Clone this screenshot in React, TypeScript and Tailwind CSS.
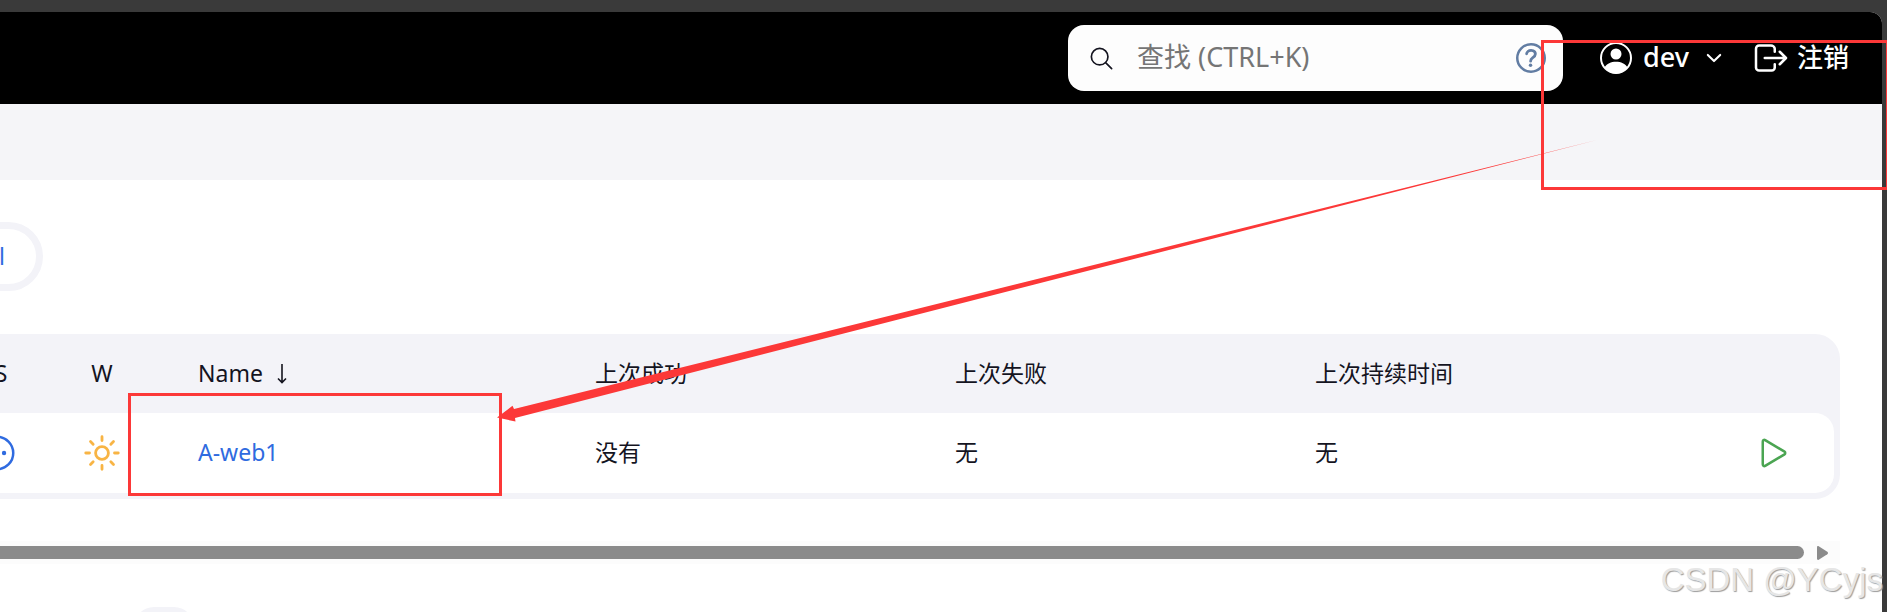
import type { ReactNode } from "react";

const stroke = {
  fill: "none",
  stroke: "currentColor",
  strokeWidth: 32,
  strokeLinecap: "round" as const,
  strokeLinejoin: "round" as const,
};

function Icon({ className, children }: { className: string; children: ReactNode }) {
  return (
    <svg viewBox="0 0 512 512" aria-hidden="true" className={className} {...stroke}>
      {children}
    </svg>
  );
}

function SearchIcon() {
  return (
    <Icon className="size-[27px] shrink-0 text-[#14141f]">
      <path d="M221.09 64a157.09 157.09 0 10157.09 157.09A157.1 157.1 0 00221.09 64z" />
      <path d="M338.29 338.29L448 448" />
    </Icon>
  );
}

function HelpIcon() {
  return (
    <Icon className="size-10">
      <path d="M256 80a176 176 0 10176 176A176 176 0 00256 80z" />
      <path
        strokeWidth={36}
        d="M200 202.29s.84-17.5 19.57-32.57C230.68 160.77 244 158.18 256 158c10.93-.14 20.69 1.67 26.53 4.45 10 4.76 29.47 16.38 29.47 41.09 0 26-17 37.81-36.37 50.8S251 281.43 251 296"
      />
      <circle cx="250" cy="348" r="22" fill="currentColor" stroke="none" />
    </Icon>
  );
}

function UserIcon() {
  return (
    <svg viewBox="0 0 32 32" aria-hidden="true" className="size-8">
      <circle cx="16" cy="16" r="15" fill="none" stroke="currentColor" strokeWidth="2" />
      <circle cx="16" cy="12" r="5.5" fill="currentColor" />
      <path d="M4.500 25.500c2-3.900 6.700-5.800 11.500-5.800s9.500 1.900 11.500 5.800c-2.900 3.900-6.900 5.900-11.500 5.900S7.400 29.400 4.500 25.500z" fill="currentColor" />
    </svg>
  );
}

function ChevronIcon() {
  return (
    <Icon className="size-[22px]">
      <path strokeWidth={48} d="M112 184l144 144 144-144" />
    </Icon>
  );
}

function LogoutIcon() {
  return (
    <Icon className="size-10">
      <path d="M304 336v40a40 40 0 01-40 40H104a40 40 0 01-40-40V136a40 40 0 0140-40h152c22.090 0 48 17.910 48 40v40M368 336l80-80-80-80M176 256h256" />
    </Icon>
  );
}

function StatusIcon() {
  return (
    <Icon className="mx-auto size-10 text-[#2f6be0]">
      <circle cx="256" cy="256" r="208" />
      <g fill="currentColor" stroke="none">
        <circle cx="166" cy="256" r="28" />
        <circle cx="256" cy="256" r="28" />
        <circle cx="346" cy="256" r="28" />
      </g>
    </Icon>
  );
}

function SunIcon() {
  return (
    <Icon className="mx-auto size-10 text-[#f8b444]">
      <path
        strokeWidth={36}
        d="M256 48v48M256 416v48M403.080 108.920l-33.940 33.940M142.860 369.140l-33.940 33.940M464 256h-48M96 256H48M403.080 403.080l-33.940-33.940M142.860 142.860l-33.940-33.940"
      />
      <circle cx="256" cy="256" r="82" strokeWidth={36} />
    </Icon>
  );
}

function PlayIcon() {
  return (
    <Icon className="size-10">
      <path d="M112 111v290c0 17.440 17 28.520 31 20.160l247.900-148.370c12.120-7.250 12.120-26.330 0-33.580L143 90.840c-14-8.360-31 2.720-31 20.160z" />
    </Icon>
  );
}

function Header() {
  return (
    <header className="flex h-[92px] items-center justify-end bg-black pr-[33px] text-[26px] text-white">
      <div className="flex h-[66px] w-[495px] items-center rounded-2xl bg-[#fdfdfd] pr-3 pl-5">
        <SearchIcon />
        <input
          type="search"
          aria-label="查找"
          placeholder="查找 (CTRL+K)"
          className="ml-[22px] min-w-0 flex-1 bg-transparent pb-0.5 text-[27px] text-black outline-none placeholder:text-[#757575]"
        />
        <a href="#help" aria-label="帮助" className="text-[#627da3]">
          <HelpIcon />
        </a>
      </div>
      <a href="#user" className="ml-[37px] flex items-center gap-[11px]">
        <UserIcon />
        <span className="pb-0.5 text-[27px] font-medium">dev</span>
      </a>
      <button type="button" aria-label="用户菜单" className="ml-3.5">
        <ChevronIcon />
      </button>
      <a href="#logout" className="ml-[26px] flex items-center gap-1.5">
        <LogoutIcon />
        <span className="pb-0.5 font-medium">注销</span>
      </a>
    </header>
  );
}

function JobTable() {
  return (
    <div className="rounded-[25px] border-6 border-[#f3f3f8] bg-[#f3f3f8]">
      <table className="w-full table-fixed border-separate border-spacing-0 text-left text-[23px] text-[#14141f]">
        <colgroup>
          <col className="w-[98px]" />
          <col className="w-[104px]" />
          <col className="w-[397px]" />
          <col className="w-[360px]" />
          <col className="w-[360px]" />
          <col />
          <col className="w-[140px]" />
        </colgroup>
        <thead>
          <tr className="h-[73px]">
            <th className="pb-1.5 text-center font-normal">S</th>
            <th className="pb-1.5 text-center font-normal">W</th>
            <th className="px-11 pb-1.5 font-normal">
              <a href="#sort" className="flex items-center gap-3.5">
                Name
                <svg viewBox="0 0 10 20" aria-hidden="true" className="h-5 w-2.5" fill="none" stroke="currentColor" strokeWidth="1.6">
                  <path d="M5 0v18M1 14.500l4 4 4-4" />
                </svg>
              </a>
            </th>
            <th className="px-11 pb-1.5 font-normal">上次成功</th>
            <th className="px-11 pb-1.5 font-normal">上次失败</th>
            <th className="px-11 pb-1.5 font-normal">上次持续时间</th>
            <th aria-label="操作" />
          </tr>
        </thead>
        <tbody>
          <tr className="h-20">
            <td className="rounded-l-[19px] bg-white pr-2">
              <StatusIcon />
            </td>
            <td className="bg-white">
              <SunIcon />
            </td>
            <td className="bg-white px-11 pb-0.5">
              <a href="#A-web1" className="text-[#2f6be0]">
                A-web1
              </a>
            </td>
            <td className="bg-white px-11 pb-0.5">没有</td>
            <td className="bg-white px-11 pb-0.5">无</td>
            <td className="bg-white px-11 pb-0.5">无</td>
            <td className="rounded-r-[19px] bg-white pr-10">
              <button type="button" aria-label="构建" className="ml-auto block text-[#4ba552]">
                <PlayIcon />
              </button>
            </td>
          </tr>
        </tbody>
      </table>
    </div>
  );
}

function Scrollbar() {
  return (
    <div aria-hidden="true" className="flex h-[23px] items-center bg-[#fcfcfc] pr-3">
      <div className="h-[13px] flex-1 rounded-full bg-[#8b8b8b]" />
      <svg viewBox="0 0 11 14" className="ml-[13px] h-3.5 w-[11px] fill-[#8b8b8b]">
        <path d="M0 1.200C0 .2.900-.2 1.700.300l8.600 5.500c.9.600.9 1.800 0 2.400l-8.600 5.500C.9 14.200 0 13.800 0 12.800z" />
      </svg>
    </div>
  );
}

function Annotations() {
  return (
    <div aria-hidden="true" className="pointer-events-none absolute inset-0 overflow-hidden">
      <div className="absolute top-10 -right-0.5 h-[150px] w-[348px] border-3 border-[#fc3838]" />
      <div className="absolute top-[393px] left-32 h-[103px] w-[374px] border-3 border-[#fc3838]" />
      <svg viewBox="0 0 1100 282" className="absolute top-[140px] left-[497px] h-[282px] w-[1100px] fill-[#fc3838]">
        <path d="M1100 0L17 269l-1.500-3.200L0 277.500l18.500 4L18 278z" />
      </svg>
    </div>
  );
}

export default function App() {
  return (
    <div className="relative h-screen overflow-hidden bg-[#3a3a3a] pt-3 pr-[5px] font-['Noto_Sans','Noto_Sans_CJK_SC',sans-serif]">
      <div className="h-full overflow-hidden rounded-tr-xl bg-white">
        <Header />
        <div className="h-[76px] bg-[#f5f5f8]" />
        <main className="-ml-[54px] pt-[42px] pr-[42px]">
          <button
            type="button"
            className="flex h-[69px] w-[97px] items-center justify-end rounded-r-full border-7 border-[#f3f3f8] pr-[31px] text-[23px] text-[#2f6be0]"
          >
            All
          </button>
          <div className="mt-[43px]">
            <JobTable />
          </div>
          <div className="mt-[42px]">
            <Scrollbar />
          </div>
          <div className="mt-[43px] ml-[188px] h-10 w-[60px] rounded-[20px] bg-[#f3f3f8]" />
        </main>
      </div>
      <Annotations />
      <p className="absolute right-1 bottom-3 font-['Liberation_Sans',sans-serif] text-[33px] leading-10 text-[#e6e6e6] [text-shadow:1px_1px_1px_#9c9c9c]">
        CSDN @YCyjs
      </p>
    </div>
  );
}
